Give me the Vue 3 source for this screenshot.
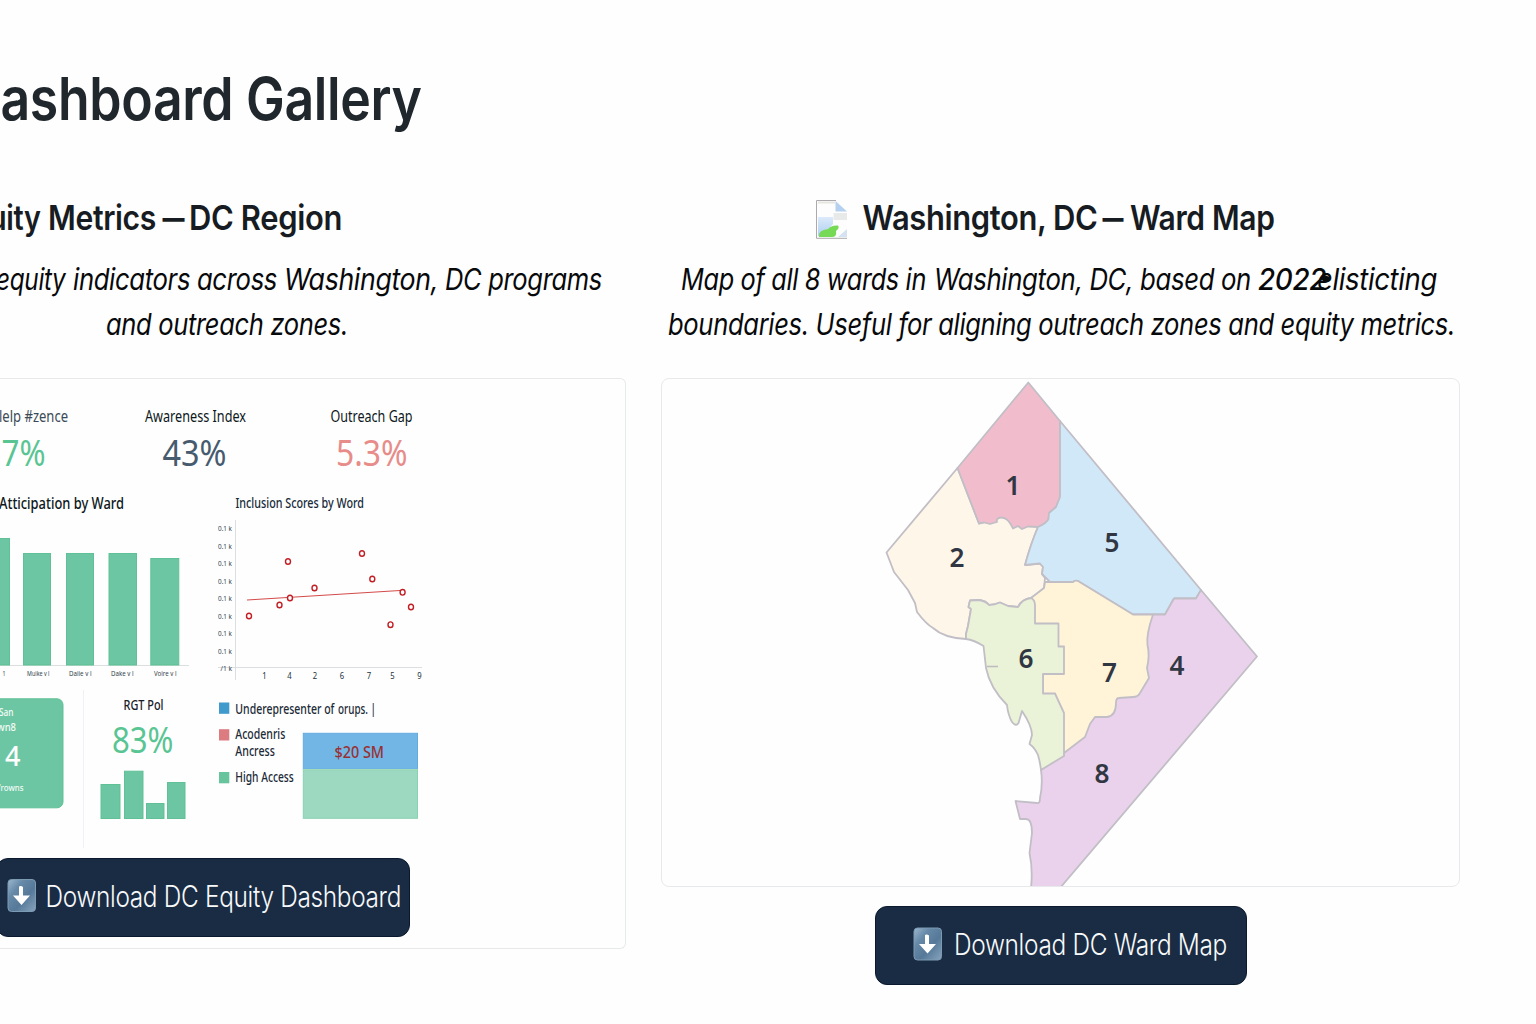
<script setup>
import { h } from 'vue'

// A single run of SVG text fitted to a fixed width.
const T = (p, { slots }) =>
  h('text', {
    x: p.x, y: p.y, textLength: p.w, lengthAdjust: 'spacingAndGlyphs',
    'font-size': p.s, 'font-weight': p.b || 400, fill: p.c,
  }, slots.default())
T.props = ['x', 'y', 'w', 's', 'b', 'c']

const bars = [
  { x: -18, y: 538, w: 28 }, { x: 23, y: 553, w: 28 }, { x: 66, y: 553, w: 28 },
  { x: 108.5, y: 553, w: 28.5 }, { x: 150.3, y: 558, w: 29 },
]
const barLabels = [
  { x: 27, t: 'Muike v l' }, { x: 69, t: 'Daiie v l' },
  { x: 111, t: 'Dake v l' }, { x: 154, t: 'Voire v l' },
]
const yTicks = [528.5, 546, 563.5, 581.5, 598.5, 616, 633.5, 651.5]
const xTicks = [[264.5, '1'], [289.5, '4'], [315, '2'], [342, '6'], [369, '7'], [392.5, '5'], [419.5, '9']]
const points = [
  [249, 616], [279.5, 605], [290, 598], [288, 561.5], [314.5, 588], [362, 553.5],
  [372.3, 579], [402.6, 592.3], [411, 607], [390.5, 624.7],
]
const miniBars = [[100.5, 784, 19], [124, 770.7, 18.5], [146, 803, 17.5], [167, 782, 17.5]]
const legend = [[702.5, '#409acb'], [729.2, '#dc7b80'], [772, '#67c49d']]

const wards = [
  { c: '#fef6e9', d: 'M957.5 468L886.5 552.5L894 572L908 590L915 603L917 612Q926 624 933 628Q944 638 966 639L966 634L968 626L971 609L968.5 607L970 600.5L979 600Q986 601 989 605Q994 605 1000 602.5L1008 606L1018 607Q1022 599 1031 598Q1040 592 1044 588L1045 578L1042 574L1043 567L1040 563.5L1025 565Q1031 543 1038 527L1010 510L979 523.5Z' },
  { c: '#f1bdcc', d: 'M1028.3 382.5L957.5 468L979 523.5L984 522.5L990 524L997 522Q996 518 1001 517.5Q1008 517 1013 528.5L1018 526L1022 529L1028 526.5L1038 527Q1047 523 1048.5 519L1049 513L1056 507L1060 497V421Z' },
  { c: '#d1e8f9', d: 'M1060 421L1201 590L1196 598.5H1174L1165 614.5H1133L1078 581Q1075 580 1073 582H1050L1045 577L1042 574L1043 567L1040 563.5L1025 565Q1031 543 1038 527Q1047 523 1048.5 519L1049 513L1056 507L1060 497Z' },
  { c: '#ebd2ec', d: 'M1153 614.5H1165L1174 598.5H1196L1201 590L1257 656.5L1060 888H1031Q1033 869 1029.5 853L1032 833Q1032 819 1026 819H1020L1015.5 801L1037 803Q1040 804 1040 798Q1043 784 1041 770L1064 753L1107 690Z' },
  { c: '#fff3d8', d: 'M1031 598L1044 588L1045 582H1073Q1075 580 1078 581L1133 614.5H1153Q1146 635 1147.5 645Q1150 655 1147 668L1149 678L1140 693Q1138 697 1133 697L1119 698Q1116 698 1116 703Q1116 716 1107 717H1095L1090 724L1085 737L1064 753L1043 735V674L1030 640Z' },
  { c: '#eaf2d8', d: 'M1031 598Q1035 600 1035 605V623.5H1058.5V646.5H1064V674H1043V693.5H1055L1064 713V756L1041 770Q1040 762 1038 755Q1035 748 1029.5 744L1032 735Q1032 726 1022 711L1018.5 723Q1016 727 1012 722Q1008 715 1007 705Q990 688 986 668L983.5 646Q974 640 966 639L966 634L968 626L971 609L968.5 607L970 600.5L979 600Q986 601 989 605Q994 605 1000 602.5L1008 606L1018 607Q1022 599 1031 598Z' },
]
const wardLabels = [
  [1, 1005.5, 495], [2, 949.5, 567], [5, 1104.5, 552], [6, 1018.5, 668],
  [7, 1102, 682], [4, 1169.5, 675], [8, 1094.5, 783],
]
</script>

<template>
  <main class="gallery">
    <h1>
      <svg width="640" height="90" viewBox="0 60 640 90">
        <T x="0.5" y="120" w="421" s="59" b="600" c="#20272d">ashboard Gallery</T>
      </svg>
    </h1>
    <div class="columns">
      <section class="left">
        <h2>
          <svg width="626" height="60" viewBox="0 190 626 60">
            <T x="-11" y="230" w="51.5" s="34.5" b="600" c="#171c22">uity</T>
            <T x="48" y="230" w="108" s="34.5" b="600" c="#171c22">Metrics</T>
            <T x="162.5" y="230" w="21.5" s="34.5" b="600" c="#171c22">–</T>
            <T x="189" y="230" w="153" s="34.5" b="600" c="#171c22">DC Region</T>
          </svg>
        </h2>
        <p>
          <svg width="626" height="129" viewBox="0 250 626 129">
            <T x="-4" y="290.3" w="69.5" s="30" c="#08090b">equity</T>
            <T x="73" y="290.3" w="204" s="30" c="#08090b">indicators across</T>
            <T x="284" y="290.3" w="154" s="30" b="450" c="#08090b">Washington,</T>
            <T x="445" y="290.3" w="157" s="30" c="#08090b">DC programs</T>
            <T x="106" y="335" w="242" s="30" c="#08090b">and outreach zones.</T>
          </svg>
        </p>
        <div class="panel dashboard">
          <svg class="chart" width="625" height="111" viewBox="0 379 625 111">
            <T x="-1" y="422.3" w="69" s="16" c="#3a4a56">lelp #zence</T>
            <T x="145" y="422.3" w="101" s="16" b="450" c="#0d1821">Awareness Index</T>
            <T x="330.5" y="422.3" w="82" s="16" b="450" c="#0d1821">Outreach Gap</T>
            <T x="1.5" y="466" w="44" s="36" c="#59c592">7%</T>
            <T x="162.5" y="466" w="64" s="36" c="#465b6e">43%</T>
            <T x="336" y="466" w="71.5" s="36" c="#e78c89">5.3%</T>
          </svg>
          <div class="row">
            <svg class="chart" width="210" height="200" viewBox="0 490 210 200">
              <T x="-1" y="509" w="125" s="16.3" b="500" c="#0d1821">Atticipation by Ward</T>
              <path d="M0 665.5H189" stroke="#dcdfe0" />
              <rect v-for="b in bars" :key="b.x" :x="b.x + 0.5" :y="b.y + 0.5" :width="b.w - 1" :height="664.5 - b.y" fill="#6dc6a3" stroke="#5fc195" />
              <T x="2.5" y="676.3" w="3" s="6.8" c="#33434d">1</T>
              <T v-for="l in barLabels" :key="l.x" :x="l.x" y="676.3" w="22.5" s="6.8" c="#33434d">{{ l.t }}</T>
            </svg>
            <svg class="chart" width="240" height="200" viewBox="210 490 240 200">
              <T x="235.5" y="508" w="128.5" s="14.5" b="500" c="#172a39">Inclusion Scores by Word</T>
              <path d="M235.5 520V680M218 667.5H422" stroke="#dcdfe2" fill="none" />
              <T v-for="y in yTicks" :key="y" x="218" :y="y + 2.8" w="14" s="7.6" c="#33434d">0.1 k</T>
              <T x="220.5" y="671.2" w="11.5" s="7" c="#33434d">/1 k</T>
              <T v-for="t in xTicks" :key="t[0]" :x="t[0] - 2.2" y="678.5" w="4.4" s="8.4" c="#23323d">{{ t[1] }}</T>
              <path d="M247 600L405 590.2" stroke="#d34b49" />
              <ellipse v-for="p in points" :key="p[0]" :cx="p[0]" :cy="p[1]" rx="2.5" ry="2.8" fill="#fff" stroke="#c21f25" stroke-width="1.4" />
            </svg>
          </div>
          <div class="row">
            <svg class="chart" width="84" height="168" viewBox="0 690 84 168">
              <rect x="-20" y="698.8" width="83" height="109" rx="6" fill="#6dc6a3" stroke="#5fc195" />
              <T x="-1" y="716" w="14.5" s="10.5" b="500" c="#f3fbf7">San</T>
              <T x="-3" y="731" w="19" s="10" b="500" c="#f3fbf7">wn8</T>
              <T x="5" y="766" w="15.5" s="27" b="500" c="#fff">4</T>
              <T x="-1" y="791" w="24.5" s="9" b="500" c="#f3fbf7">'rowns</T>
              <path d="M83.5 690V848" stroke="#f0f1f2" />
            </svg>
            <svg class="chart" width="126" height="168" viewBox="84 690 126 168">
              <T x="123.5" y="709.7" w="40" s="14.5" b="500" c="#172029">RGT Pol</T>
              <T x="112" y="752.5" w="61.5" s="35.5" c="#59c592">83%</T>
              <rect v-for="m in miniBars" :key="m[0]" :x="m[0] + 0.5" :y="m[1] + 0.5" :width="m[2]" :height="818 - m[1]" fill="#6dc6a3" stroke="#5fc195" />
            </svg>
            <svg class="chart" width="240" height="168" viewBox="210 690 240 168">
              <rect v-for="l in legend" :key="l[0]" x="219" :y="l[0]" width="10.3" height="11.3" :fill="l[1]" />
              <T x="235.3" y="713.5" w="99" s="14.3" b="500" c="#1b2a37">Underepresenter of</T>
              <T x="338" y="713.5" w="38" s="14.3" b="500" c="#1b2a37">orups. |</T>
              <T x="235.3" y="739" w="50" s="14.3" b="500" c="#1b2a37">Acodenris</T>
              <T x="235.3" y="756.2" w="39.5" s="14.3" b="500" c="#1b2a37">Ancress</T>
              <T x="235.3" y="782.2" w="58.5" s="14.3" b="500" c="#1b2a37">High Access</T>
              <rect x="303.3" y="733.3" width="114.2" height="36" fill="#72b6e6" stroke="#64acdf" />
              <rect x="303.3" y="769.7" width="114.2" height="48.6" fill="#9dd9c0" stroke="#8ad1b3" />
              <path d="M303 769.5H418" stroke="#a3dcb8" />
              <T x="334.5" y="758" w="49.5" s="17" b="500" c="#9a2f31">$20 SM</T>
            </svg>
          </div>
          <div class="button first">
            <svg width="412" height="77" viewBox="-3 859 412 77">
              <defs>
                <linearGradient id="tile" x1="0" y1="0" x2="1" y2="1">
                  <stop offset="0" stop-color="#9bb7ce" /><stop offset=".3" stop-color="#6689a8" />
                  <stop offset=".6" stop-color="#567999" /><stop offset="1" stop-color="#87a4be" />
                </linearGradient>
              </defs>
              <g transform="translate(7.5 879)">
                <rect x=".5" y=".5" width="27.5" height="32" rx="3.5" fill="url(#tile)" stroke="#7d9ab3" />
                <path d="M11.5 7.5Q13.5 6.5 15.5 8V16.5H22.5L14 26L5.5 16.5H11.5Z" fill="#fff" />
              </g>
              <T x="45.5" y="906.5" w="355.5" s="29.5" b="350" c="#f7f9fb">Download DC Equity Dashboard</T>
            </svg>
          </div>
        </div>
      </section>

      <section class="right">
        <h2>
          <svg width="799" height="60" viewBox="661 190 799 60">
            <defs>
              <linearGradient id="sky" x1="0" y1="0" x2="0" y2="1">
                <stop offset="0" stop-color="#dceafa" /><stop offset="1" stop-color="#aed0f2" />
              </linearGradient>
            </defs>
            <path d="M816.5 200.5H836L846.5 211V238.5H816.5Z" fill="#fdfdfd" />
            <path d="M818 217H833V224L822 236H818Z" fill="url(#sky)" />
            <path d="M835.5 201L847 211.5H835.5Z" fill="#b5d1ef" />
            <path d="M833.5 213H847V220H833.5Z" fill="#e8eaea" />
            <path d="M838 237L847 229V237Z" fill="#d5e2f2" />
            <path d="M819 237Q818 230 828 229Q831 225 838 225.5Q840 228 836 231Q837 237 832 237Z" fill="#76da57" />
            <path d="M847 238.3H816.5V200.5H836" fill="none" stroke="#aaa9ad" />
            <path d="M818 202.5H835" stroke="#e6e5df" stroke-width="2" />
            <T x="862.5" y="230" w="184" s="34.5" b="600" c="#171c22">Washington,</T>
            <T x="1053" y="230" w="44.5" s="34.5" b="600" c="#171c22">DC</T>
            <T x="1102.5" y="230" w="20.5" s="34.5" b="600" c="#171c22">–</T>
            <T x="1130" y="230" w="144.5" s="34.5" b="600" c="#171c22">Ward Map</T>
          </svg>
        </h2>
        <p>
          <svg width="799" height="129" viewBox="661 250 799 129">
            <T x="681" y="290.3" w="245" s="30" c="#08090b">Map of all 8 wards in</T>
            <T x="934" y="290.3" w="317" s="30" c="#08090b">Washington, DC, based on</T>
            <T x="1258" y="290.3" w="68" s="30" b="500" c="#08090b">2022</T>
            <path d="M1323 271L1324 275L1330 277L1329.500 281L1325 283L1322 280Z" fill="#08090b" />
            <T x="1317" y="290.3" w="120" s="30" b="450" c="#08090b">elisticting</T>
            <T x="668" y="335" w="787" s="30" c="#08090b">boundaries. Useful for aligning outreach zones and equity metrics.</T>
          </svg>
        </p>
        <div class="panel map">
          <svg class="chart" width="797" height="507" viewBox="662 379 797 507">
            <path v-for="w in wards" :key="w.c" :d="w.d" :fill="w.c" stroke="#c1bec6" stroke-width="1.8" stroke-linejoin="round" />
            <path d="M987 666.5H998" stroke="#bdbac2" stroke-width="1.5" />
            <T v-for="l in wardLabels" :key="l[0]" :x="l[1]" :y="l[2]" w="15" s="26.5" b="600" c="#303743">{{ l[0] }}</T>
          </svg>
        </div>
        <div class="button second">
          <svg width="370" height="77" viewBox="876 906.500 370 77">
            <g transform="translate(913.5 927)">
              <rect x=".5" y=".5" width="27.5" height="32" rx="3.5" fill="url(#tile)" stroke="#7d9ab3" />
              <path d="M11.5 7.5Q13.5 6.5 15.5 8V16.5H22.5L14 26L5.5 16.5H11.5Z" fill="#fff" />
            </g>
            <T x="954" y="954.3" w="273" s="29.5" b="350" c="#f7f9fb">Download DC Ward Map</T>
          </svg>
        </div>
      </section>
    </div>
  </main>
</template>

<style>
body { background: #fefefe; overflow: hidden; }
</style>

<style scoped>
.gallery {
  box-sizing: border-box;
  width: 1536px;
  height: 1024px;
  padding-top: 60px;
  overflow: hidden;
  font-family: Inter, "Liberation Sans", sans-serif;
  letter-spacing: -0.025em;
}
svg { display: block; }
h1, h2, p { margin: 0; }
h1 { height: 130px; }
p { font-style: italic; }
.columns { display: flex; gap: 35px; }
.left { width: 626px; }
.right { width: 799px; }
.panel {
  box-sizing: border-box;
  border: 1px solid #e8e9ea;
  margin-top: -1px;
  overflow: hidden;
}
.dashboard { height: 571px; border-left: 0; border-radius: 0 6px 6px 0; }
.map { height: 509px; border-radius: 8px; }
.chart { font-family: "Noto Sans", "Open Sans", sans-serif; letter-spacing: 0; }
.row { display: flex; }
.button {
  box-sizing: border-box;
  height: 79px;
  border: 1px solid #0a192e;
  border-radius: 12px;
  background: #1a2c43;
  overflow: hidden;
}
.first { width: 414px; margin-left: -4px; }
.second { width: 372px; margin: 18.5px 0 0 214px; }
</style>
